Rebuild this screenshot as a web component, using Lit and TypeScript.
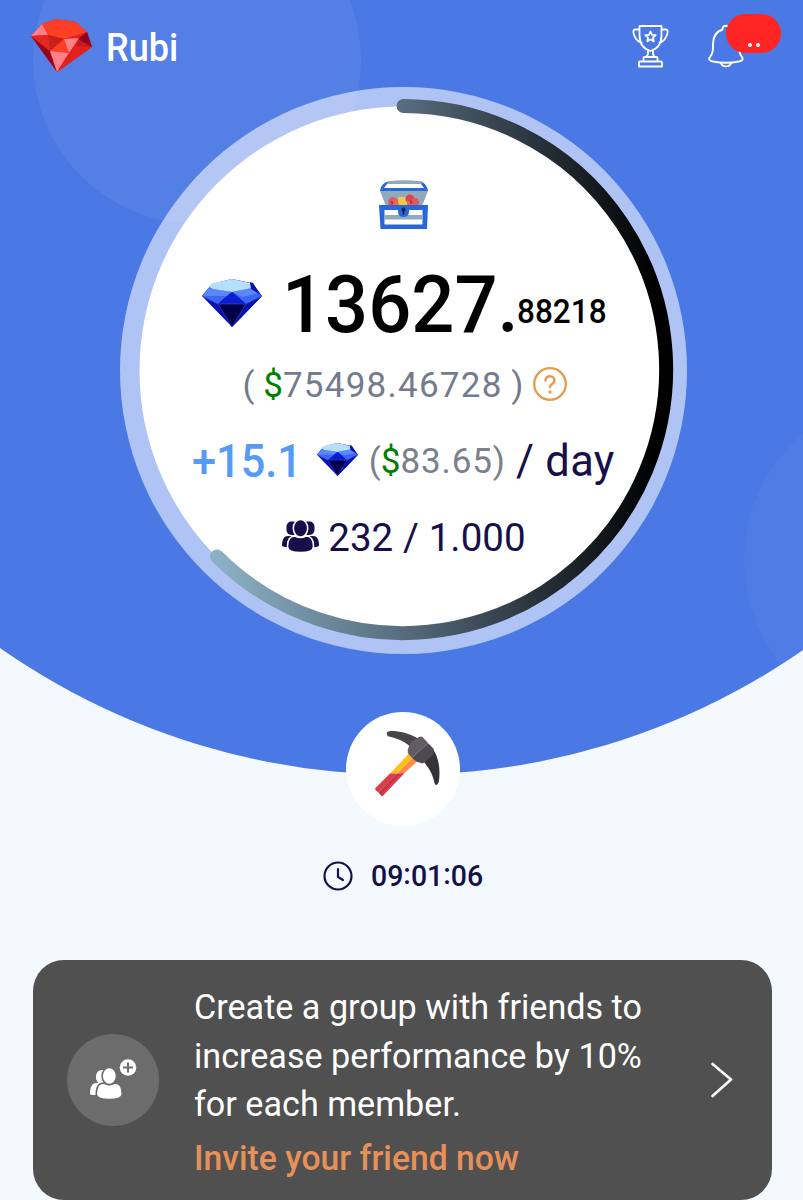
import { LitElement, html, css } from "lit";
import { customElement, property } from "lit/decorators.js";

@customElement("blue-gem")
class BlueGem extends LitElement {
  static styles = css`
    :host { display: block; }
    svg { display: block; width: 100%; height: 100%; }
  `;
  render() {
    return html`<svg viewBox="0 0 60 48" preserveAspectRatio="none">
      <path fill="#0a10b4" d="M0 17 10 5 30 0 49 4 60 17 30 48Z" />
      <path fill="#3d66f2" d="M0 17 8 7 14 9 11 10 30 13 16 25Z" />
      <path fill="#5b87fb" d="M11 10 30 13 24 17 1 17 7 9Z" />
      <path fill="#3d66f2" d="M30 13 50 9 60 17 44 25Z" />
      <path fill="#5b87fb" d="M30 13 50 9 57 14 40 18Z" />
      <path fill="#b5dfff" d="M10 4.500 30 0 48 4 50 9 30 13 11 10 7 8Z" />
      <path fill="#0b1cd2" d="M30 13 44 25H16Z" />
      <path fill="#00004a" d="M16 25h28L30 48Z" />
      <path fill="#0712a8" d="M44 25 60 17 30 48ZM48 3l3 1 8 12-10-6Z" />
      <path fill="none" stroke="#3260ee" stroke-width=".5" d="M0 17 16 25H44L60 17M16 25 30 48 44 25" />
    </svg>`;
  }
}

@customElement("app-root")
class AppRoot extends LitElement {
  @property() amount = "13627.";
  @property() countdown = "09:01:06";

  static styles = css`
    :host {
      display: block; width: 803px; height: 1200px; overflow: hidden;
      background: #f3f9fe; font-family: Roboto, "Liberation Sans", sans-serif;
      color: #170f49;
    }
    * { box-sizing: border-box; }
    svg { display: block; flex: none; }
    .page { position: relative; display: flex; flex-direction: column; height: 1200px; }
    .backdrop { position: absolute; left: 0; top: 0; z-index: 0; }
    .header, .dial, .pick, .timer, .card { position: relative; z-index: 1; flex: none; }
    .header { height: 87px; display: flex; padding: 0 22px 0 31px; }
    .logo { margin-top: 18.5px; }
    .brand, .amount, .fraction, .gain, .time, .line, .invite { transform-origin: 0 50%; }
    .brand {
      margin: 26px 0 0 14px; font-size: 38px; line-height: 44px; font-weight: 500;
      color: #fff; white-space: nowrap; transform: scaleX(.95);
    }
    .actions { display: flex; margin-left: auto; }
    .trophy { margin-top: 24px; }
    .bell { position: relative; width: 73px; margin-left: 39px; padding-top: 24px; }
    .badge {
      position: absolute; left: 18px; top: 14px; width: 55px; height: 39px;
      border-radius: 19.5px; background: #ff2525; display: flex; gap: 4px;
      justify-content: center; padding-top: 29px;
    }
    .dot { width: 4px; height: 4px; border-radius: 50%; background: #fff; }
    .dial {
      width: 567px; height: 567px; margin-left: 120px;
      display: flex; flex-direction: column; align-items: center;
    }
    .ring { position: absolute; inset: 0; z-index: -1; }
    .chest { margin-top: 93px; }
    .row { display: flex; align-items: center; white-space: nowrap; flex: none; }
    .total { height: 86px; margin-top: 31px; padding-left: 1px; }
    .gem-lg { width: 60px; height: 48px; margin: 0 20px 4px 0; }
    .amount {
      font-size: 80.5px; line-height: 86px; font-weight: 500; color: #000;
      transform: scaleX(.942); margin-right: -16px;
    }
    .fraction {
      font-size: 33px; line-height: 40px; font-weight: 500; color: #000; margin: 14px -4px 0 0;
      transform: scaleX(.955);
    }
    .value { height: 44px; margin-top: 15px; font-size: 35px; color: #747b8d; padding-left: 3px; }
    .currency { color: green; }
    .digits { letter-spacing: 1.25px; }
    .help { margin: -2px 0 0 10px; }
    .rate { height: 54px; margin-top: 27px; padding-left: 0; }
    .gain {
      font-size: 45.5px; font-weight: 500; color: #559bf6;
      transform: scaleX(.952); margin-right: -6px;
    }
    .gem-sm { width: 41px; height: 33px; margin: 0 11px 4px 15px; }
    .usd { font-size: 35px; color: #7b808b; }
    .usd .digits { letter-spacing: .9px; }
    .day { font-size: 43.5px; margin-left: 11px; letter-spacing: .3px; }
    .team { height: 46px; margin-top: 26px; font-size: 38.5px; padding-left: 1px; letter-spacing: .1px; }
    .people { margin: -2px 9px 0 0; }
    .pick {
      width: 114px; height: 114px; margin: 58px 0 0 346px; border-radius: 50%; background: #fff;
      padding: 17px 0 0 28px;
    }
    .timer {
      height: 36px; margin-top: 32px; display: flex; justify-content: center; padding-left: 3px;
      align-items: center; font-size: 29.5px; font-weight: 500; gap: 18px;
    }
    .time { transform: scaleX(.965); margin: -1px -4px 0 0; }
    .colon { vertical-align: 2px; line-height: 1; }
    .card {
      width: 739px; height: 240px; margin: 66px 0 0 33px; border-radius: 31px;
      background: #505050; color: #fff; display: flex; align-items: center;
      padding: 0 39px 0 34px;
    }
    .disc {
      width: 92px; height: 92px; border-radius: 50%; background: #6c6c6c;
      display: flex; align-items: center; justify-content: center; flex: none;
    }
    .copy {
      margin-left: 35px; font-size: 35.2px; line-height: 48.5px; white-space: nowrap;
      padding-top: 10px;
    }
    .line { transform: scaleX(.97); }
    .invite { color: #e7915a; font-weight: 500; line-height: 58px; transform: scaleX(.957); }
    .next { margin-left: auto; }
  `;

  backdrop() {
    return html`<svg class="backdrop" width="803" height="780" viewBox="0 0 803 780">
      <defs><clipPath id="dome"><circle cx="403" cy="72" r="703" /></clipPath></defs>
      <g clip-path="url(#dome)">
        <path fill="#4a79e5" d="M0 0h803v780H0z" />
        <circle cx="197" cy="60" r="164" fill="#fff" fill-opacity=".06" />
        <circle cx="908" cy="560" r="164" fill="#fff" fill-opacity=".035" />
      </g>
    </svg>`;
  }

  ring() {
    return html`<svg class="ring" width="567" height="567" viewBox="0 0 567 567">
      <defs>
        <linearGradient id="arc" x1="97" x2="548" y1="0" y2="0" gradientUnits="userSpaceOnUse">
          <stop offset="0" stop-color="#8cb1c6" />
          <stop offset=".43" stop-color="#55697a" />
          <stop offset=".97" stop-color="#000" />
        </linearGradient>
      </defs>
      <circle cx="283.5" cy="283.5" r="283.5" fill="#fff" fill-opacity=".56" />
      <circle cx="283.5" cy="283.5" r="264" fill="#fff" />
      <path d="M283.5 19A263.500 263.500 0 1 1 97 469.500" fill="none" stroke="url(#arc)"
        stroke-width="14" stroke-linecap="round" />
    </svg>`;
  }

  gem() {
    return html`<svg class="logo" width="61" height="53" viewBox="0 0 61 53">
      <path fill="#e3211c" d="M0 17 11 5 25 0 45 3 56 13 61 28 26 53Z" />
      <path fill="#ff3e26" d="M11 5 25 0 45 3 56 13 33 20 17 16Z" />
      <path fill="#ff8087" d="M0 17 11 5 17 16Z" />
      <path fill="#95051c" d="M0 17 19 32 26 53Z" />
      <path fill="#e62720" d="M0 17 17 16 19 32Z" />
      <path fill="#c8201a" d="M17 16 33 20 19 32Z" />
      <path fill="#ff3e26" d="M19 32 33 20 38 34Z" />
      <path fill="#ff8087" d="M19 32 38 34 26 53ZM33 20 48 19 38 34Z" />
      <path fill="#c91820" d="M56 13 48 19 44 29 61 28Z" />
      <path fill="#8f0420" d="M56 13 61 28 47 20Z" />
      <path fill="#e3211c" d="M38 34 44 27 61 28 26 53Z" />
    </svg>`;
  }

  trophy() {
    return html`<svg class="trophy" width="37" height="44" viewBox="0 0 37 44" fill="none" stroke="#fff"
      stroke-width="1.8" stroke-linejoin="round" stroke-linecap="round">
      <path d="M7.500 2h22v9c0 8-4 14-11 16C11.500 25 7.500 19 7.500 11ZM7.500 5.500H3c-4 0 0 12 6.500 13M29.500 5.500H34c4 0 0 12-6.500 13" />
      <path d="M16 27v3l-1.500 3h8L21 30v-3M11.500 37.500V34q0-1 1-1h12q1 0 1 1v3.500M8 37.500h21q1 0 1 1v4H7v-4q0-1 1-1Z" />
      <path d="m18.500 7.500 1.500 3.300 3.700.4-2.700 2.500.7 3.600-3.200-1.800-3.200 1.800.7-3.600-2.700-2.500 3.700-.4Z" />
    </svg>`;
  }

  bell() {
    return html`<svg width="36" height="44" viewBox="0 0 36 44" fill="none" stroke="#fff"
      stroke-width="1.900" stroke-linejoin="round" stroke-linecap="round">
      <path d="M14.500 5.500c0-5 7-5 7 0C29 8 31 13 31 20s0 9 3 13c2 3-1 4-3 4.500-8 1.500-18 1.500-26 0-3-.5-5-2-3-4.500 3-4 3-6 3-13S7 8 14.500 5.500Z" />
      <path d="M13 39c1 4.500 9 4.500 10 0" />
    </svg>`;
  }

  chest() {
    return html`<svg class="chest" width="50" height="51" viewBox="0 0 50 51">
      <path fill="#8faabd" d="M1 11h48l-6 15H7Z" />
      <path fill="#2767d7" d="M1 11Q2 3 9 1.500h33Q48 4 49 11Z" />
      <path fill="#8faabd" d="M9 1.500Q25-1 42 1.500L43 4H8Z" />
      <path fill="#fff" d="M5 8 8 4h34l3 4Z" />
      <path fill="#edc94e" d="M19 17h10v9H19Z" />
      <circle cx="14" cy="22" r="5" fill="#e05865" />
      <circle cx="31" cy="19" r="4.500" fill="#dc434d" />
      <circle cx="36" cy="22" r="4" fill="#e05865" />
      <path fill="#e66a51" d="m14 19 4 2 3 5h-7ZM28 20l4 2 1 4h-5Z" />
      <path fill="#bf304a" d="m11 21 4 1-2 4ZM31 19l3 3-3 3Z" />
      <path fill="#2767d7" d="M0 25h49l-1 24H1.500Z" />
      <path fill="#fff" d="M5.500 30h38v14.500h-38Z" />
      <path fill="#8faabd" d="M5.500 35h38v4.500h-38Z" />
      <path fill="#2767d7" d="M19 25h11v6q0 6-5.500 6T19 31Z" />
      <circle cx="24.500" cy="29.500" r="2" fill="#0c1e4b" />
      <path fill="#0c1e4b" d="M23.700 30h1.600v4.500h-1.600Z" />
    </svg>`;
  }

  help() {
    return html`<svg class="help" width="34" height="34" viewBox="0 0 34 34" fill="none" stroke="#e79a4d">
      <circle cx="17" cy="17" r="15.800" stroke-width="2.300" />
      <path d="M12.500 13.500c0-6 9-5.500 9 0 0 3.500-4.500 3.500-4.500 6.500" stroke-width="2.500" stroke-linecap="round" />
      <circle cx="17" cy="25" r="1.700" fill="#e79a4d" stroke="none" />
    </svg>`;
  }

  people() {
    return html`<svg class="people" width="37" height="32" viewBox="0 0 37 32" fill="#170f49">
      <rect x="4.500" y="1.500" width="12" height="13.500" rx="5" />
      <rect x="20.500" y="1.500" width="12" height="13.500" rx="5" />
      <path d="M0 26c0-7 2-10 6-10h25c4 0 6 3 6 10q-2 1-7 1.500H7Q2 27 0 26Z" />
      <g stroke="#fff" stroke-width="1.500">
        <path d="M5.500 26.500c0-7.500 3-10.500 7.500-10.500q5.500 3 11 0c4.500 0 7.500 3 7.500 10.500 0 3.500-4.500 6-13 6s-13-2.500-13-6Z" />
        <ellipse cx="18.500" cy="8.300" rx="7.200" ry="8.800" />
      </g>
    </svg>`;
  }

  pickaxe() {
    return html`<svg width="68" height="68" viewBox="0 0 68 68">
      <path fill="#fbc01b" d="M35.500 24 39.500 28 23 44.500H16Z" />
      <path fill="#fb8b45" d="m39.500 28 4 4L30 44.500h-7Z" />
      <path fill="#dc3d4c" d="M16 44.500h7L4.500 63.500 1.500 61q-1-1 0-2Z" />
      <path fill="#be3147" d="M23 44.500h7L9 66.500q-1 1-2 0l-2.500-3Z" />
      <path fill="#dc3d4c" d="M26.500 44.500H30L9 66.500l-2-2Z" />
      <path fill="#484449" d="M12.800 4.500C12.500 2 18 2 22 2.200 31 3 38 6 45 10L36 17.500C29 11.500 22 9 14 7.300q-1-1-1.200-2.800Z" />
      <path fill="#343438" d="M59 20c4 6 6.500 14 6.500 24q0 11-3 12-2 0-3-6C57.500 43 54 38 50 33Z" />
      <path fill="#625d65" d="M45 8q2-1 3.500 0l5.500 6-16 15-4.200-5v-3.500l2.700-7.300Z" />
      <path fill="#4d4950" d="m54 14 5.500 5.800v5.700l-10.700 9-6-1.700L38 29Z" />
    </svg>`;
  }

  clock() {
    return html`<svg width="30" height="30" viewBox="0 0 30 30" fill="none" stroke="#170f49" stroke-width="2.200"
      stroke-linecap="round" stroke-linejoin="round">
      <circle cx="15" cy="15" r="13.500" /><path d="M15 8v8l5 3" />
    </svg>`;
  }

  invite() {
    return html`<svg width="48" height="42" viewBox="0 0 48 42" fill="#fff">
      <rect x="7" y="11" width="13" height="14" rx="6" />
      <path d="M1 35c0-7 2-11 6-11h10v12H6q-5 0-5-1Z" />
      <g stroke="#6c6c6c" stroke-width="1.600">
        <path d="M7.300 35c0-8 3-11 7.500-11q5.500 3 11 0c5 0 7.500 3 7.500 11 0 4-5 5.500-13 5.500S7.300 39 7.300 35Z" />
        <ellipse cx="20.300" cy="17" rx="7.200" ry="8.600" />
      </g>
      <circle cx="39" cy="8.500" r="8.300" />
      <path d="M39 3.500v10M34 8.500h10" stroke="#6c6c6c" stroke-width="2" />
    </svg>`;
  }

  render() {
    const parts = this.countdown.split(":");
    return html`<div class="page">
      ${this.backdrop()}
      <div class="header">
        ${this.gem()}
        <div class="brand">Rubi</div>
        <div class="actions">
          ${this.trophy()}
          <div class="bell">
            ${this.bell()}
            <div class="badge"><span class="dot"></span><span class="dot"></span></div>
          </div>
        </div>
      </div>
      <div class="dial">
        ${this.ring()}
        ${this.chest()}
        <div class="row total">
          <blue-gem class="gem-lg"></blue-gem>
          <span class="amount">${this.amount}</span><span class="fraction">88218</span>
        </div>
        <div class="row value">
          <span class="worth">( <span class="currency">$</span><span class="digits">75498.46728</span> )</span>${this.help()}
        </div>
        <div class="row rate">
          <span class="gain">+15.1</span><blue-gem class="gem-sm"></blue-gem>
          <span class="usd">(<span class="currency">$</span><span class="digits">83.65</span>)</span><span class="day">/ day</span>
        </div>
        <div class="row team">${this.people()}<span class="count">232 / 1.000</span></div>
      </div>
      <div class="pick">${this.pickaxe()}</div>
      <div class="timer">
        ${this.clock()}
        <span class="time">${parts.map((p, i) => html`${i ? html`<span class="colon">:</span>` : ""}${p}`)}</span>
      </div>
      <div class="card">
        <div class="disc">${this.invite()}</div>
        <div class="copy">
          <div class="line">Create a group with friends to</div>
          <div class="line">increase performance by 10%</div>
          <div class="line">for each member.</div>
          <div class="invite">Invite your friend now</div>
        </div>
        <svg class="next" width="22" height="36" viewBox="0 0 22 36" fill="none" stroke="#fff"
          stroke-width="2.600" stroke-linecap="round" stroke-linejoin="round"><path d="M1.500 2 20 17.500 1.500 34" /></svg>
      </div>
    </div>`;
  }
}
